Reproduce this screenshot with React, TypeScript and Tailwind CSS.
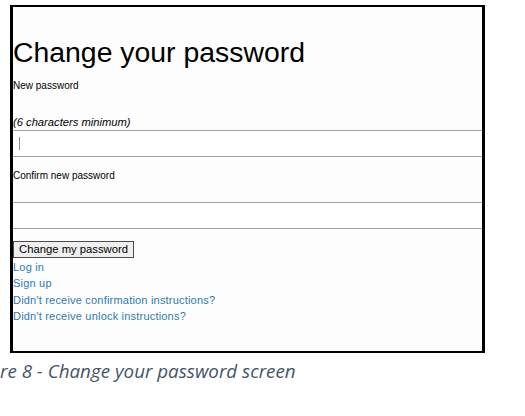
export default function App() {
  const links = [
    'Log in',
    'Sign up',
    "Didn't receive confirmation instructions?",
    "Didn't receive unlock instructions?",
  ]

  return (
    <div className="w-[525px] h-[416px] bg-white overflow-hidden">
      {/* Screenshot frame */}
      <div className="ml-[10px] mt-[5px] w-[475px] h-[348px] border-black border-x-[3px] border-y-2 bg-[#fdfdfd] overflow-hidden font-['Liberation_Sans',Arial,sans-serif] text-black">
        <h1 className="mt-[29px] text-[28.4px] leading-[32px] font-normal">Change your password</h1>

        <div className="mt-[12px] text-[10px] leading-[12px]">New password</div>
        <div className="mt-[24px] text-[11.2px] leading-[13px] italic">(6 characters minimum)</div>

        <div className="mt-px w-[520px] h-[27px] border-y border-[#a3a3a3] bg-white flex items-center pl-[6px]">
          <span className="w-px h-[13px] bg-[#8a8a8a]" />
        </div>

        <div className="mt-[13px] text-[10px] leading-[12px]">Confirm new password</div>

        <div className="mt-[20px] w-[520px] h-[27px] border-y border-[#a3a3a3] bg-white" />

        <button className="mt-[12px] w-[121px] h-[17px] border border-[#4d4d4d] bg-[#efefef] text-[11.25px] leading-[15px] text-black flex items-center justify-center">
          Change my password
        </button>

        <div className="mt-px flex flex-col">
          {links.map((l) => (
            <a key={l} className="text-[11px] tracking-[0.2px] leading-[16.4px] text-[#2b7bb6]">
              {l}
            </a>
          ))}
        </div>
      </div>

      {/* Figure caption, cut off on the left */}
      <div className="mt-[6px] font-['Open_Sans',sans-serif] italic text-[18.8px] leading-[24px] text-[#44546a] whitespace-nowrap">
        re 8 - Change your password screen
      </div>
    </div>
  )
}
